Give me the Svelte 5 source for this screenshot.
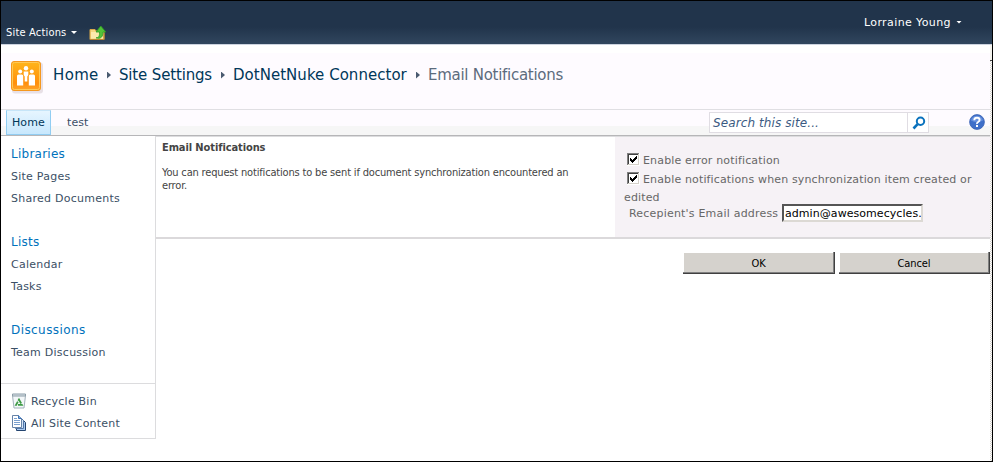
<script>
  const crumbs = ['Home', 'Site Settings', 'DotNetNuke Connector'];
  const groups = [
    { title: 'Libraries', cls: 'lib', items: ['Site Pages', 'Shared Documents'] },
    { title: 'Lists', cls: 'lists', items: ['Calendar', 'Tasks'] },
    { title: 'Discussions', cls: 'disc', items: ['Team Discussion'] }
  ];
  let email = $state('admin@awesomecycles.com');
</script>

{#snippet check()}
  <svg class="check" width="13" height="13" viewBox="0 0 13 13" shape-rendering="crispEdges">
    <path fill="#fff" d="M0 0h13v13H0z" />
    <path fill="#808080" d="M0 0h12v1H1v11H0z" />
    <path fill="#404040" d="M1 1h10v1H2v9H1z" />
    <path fill="#d4d0c8" d="M11 1h1v11H1v-1h10z" />
    <path fill="#000" d="M3 5h1v1h1v1h1V6h1V5h1V4h1V3h1v3H9v1H8v1H7v1H6v1H5V9H4V8H3z" />
  </svg>
{/snippet}

<div class="page">
  <header class="ribbon">
    <div class="actions">
      <span class="sa">Site Actions</span>
      <i class="caret"></i>
      <svg class="folder" width="17" height="16" viewBox="0 0 17 16">
        <path d="M1 4.500h5l1 1.500h8v8.500H1z" fill="#f6d883" stroke="#d9a94b" />
        <path d="M2 7h12v6.500H2z" fill="#fbe9ae" />
        <path d="M1 14.500h14V8" fill="none" stroke="#b98630" />
        <path d="M7 12.800c3.500 0 3.500-2.300 3.500-5.800H7L11.800 1l5 6H14c0 4.500-2 7.500-7 5.800z" fill="#52c238" stroke="#2c9a24" stroke-width=".8" />
      </svg>
    </div>
    <div class="user"><span>Lorraine Young</span><i class="caret"></i></div>
  </header>

  <div class="body">
    <div class="main">
      <div class="title">
        <svg class="logo" width="34" height="34" viewBox="0 0 34 34">
          <defs>
            <linearGradient id="lg" x1="0" y1="0" x2="0" y2="1">
              <stop offset="0" stop-color="#ffb61c" />
              <stop offset=".75" stop-color="#ff8f0c" />
              <stop offset="1" stop-color="#ffa62c" />
            </linearGradient>
          </defs>
          <rect x="2" y="2.500" width="31" height="31" rx="3" fill="#d8cfd6" opacity=".6" />
          <rect x="1.500" y="1.500" width="29" height="29" rx="2.500" fill="url(#lg)" stroke="#f5981f" />
          <rect x="2.500" y="2.500" width="27" height="27" rx="2" fill="none" stroke="#ffc956" />
          <g fill="#fff">
            <circle cx="16" cy="8.200" r="2.200" />
            <circle cx="10.200" cy="11.500" r="2" />
            <circle cx="21.800" cy="11.500" r="2" />
            <path d="M7 16q0-1.500 1.500-1.500h3.200q1.500 0 1.500 1.500v9.500H7zM18.800 16q0-1.500 1.500-1.500h3.200q1.500 0 1.500 1.500v9.500h-6.200zM13.700 11.500h4.600v3.500l-1 1.500v5h-2.600v-5l-1-1.500z" />
          </g>
        </svg>
        <nav class="crumbs">
          {#each crumbs as c, i}
            <span class="c{i}">{c}</span><i class="arrow"></i>
          {/each}
          <span class="here">Email Notifications</span>
        </nav>
      </div>

      <div class="topnav">
        <span class="tab on">Home</span>
        <span class="tab test">test</span>
        <div class="search">
          <span class="q">Search this site...</span>
          <span class="go">
            <svg width="14" height="14" viewBox="0 0 14 14">
              <circle cx="8.500" cy="5.300" r="3.700" fill="none" stroke="#0a72bd" stroke-width="2" />
              <path d="M5.600 8.200L1.500 12.500" stroke="#0a72bd" stroke-width="2.600" />
            </svg>
          </span>
        </div>
        <svg class="help" width="16" height="16" viewBox="0 0 16 16">
          <circle cx="8" cy="8" r="7.400" fill="#3f6fc9" stroke="#3a62b4" stroke-width=".8" />
          <path d="M2 6.500a6.200 6.200 0 0 1 12 0q-6 3-12 0z" fill="#6690de" />
          <path d="M5.300 6.200Q5.400 3.800 8 3.800t2.600 2.200q0 1.200-1.400 2T8 10" fill="none" stroke="#fff" stroke-width="1.900" />
          <rect x="7" y="11" width="2" height="2" fill="#fff" />
        </svg>
      </div>

      <div class="cols">
        <aside>
          <div class="groups">
            {#each groups as g}
              <section>
                <h3 class={g.cls}>{g.title}</h3>
                {#each g.items as item}<a>{item}</a>{/each}
              </section>
            {/each}
          </div>
          <div class="tools">
            <a>
              <svg width="16" height="16" viewBox="0 0 16 16">
                <path d="M1.500 2.500h13L13 15H3z" fill="#f3f7f9" stroke="#a3b1ba" />
                <path d="M1.500 1h13v2h-13z" fill="#dbe3e8" stroke="#8b9ca7" />
                <path d="M8 6.500l2.900 5.300H5.100z" fill="none" stroke="#3e9a44" stroke-width="1.800" stroke-dasharray="4.500 1" />
              </svg>
              <span>Recycle Bin</span>
            </a>
            <a>
              <svg width="16" height="16" viewBox="0 0 16 16">
                <path d="M5.500 4.500h6l3 3v8h-9z" fill="#a9c9f0" stroke="#24446f" />
                <path d="M4.500 2.500h5l3 3v8h-8z" fill="#d6e6f8" stroke="#5478a8" />
                <path d="M1.500.5h6l3 3v9h-9z" fill="#fff" stroke="#6683a8" />
                <path d="M7.500.5v3h3" fill="#7fb0e8" stroke="#3d6fae" />
                <path d="M3 3.500h3M3 5.500h6M3 7.500h6M3 9.500h6" stroke="#7aa0cf" />
              </svg>
              <span class="asc">All Site Content</span>
            </a>
          </div>
        </aside>

        <div class="content">
          <div class="section">
            <div class="desc">
              <h4>Email Notifications</h4>
              <p><span>You can request notifications to be sent if document synchronization encountered an</span><br />error.</p>
            </div>
            <div class="controls">
              <div class="row r1">{@render check()}<span>Enable error notification</span></div>
              <div class="row r2">{@render check()}<span>Enable notifications when synchronization item created or</span></div>
              <div class="row r3"><span>edited</span></div>
              <div class="row r4"><span>Recepient's Email address</span><input bind:value={email} aria-label="Email" /></div>
            </div>
          </div>
          <div class="buttons"><button>OK</button><button class="cancel">Cancel</button></div>
        </div>
      </div>
    </div>
    <div class="scroll"><i></i></div>
  </div>
</div>

<style>
  .page {
    box-sizing: border-box; width: 993px; height: 462px; border: 1px solid #000;
    background: #fff; overflow: hidden; display: flex; flex-direction: column;
    font: 11px/22px "DejaVu Sans", Verdana, sans-serif; color: #3b4f65; letter-spacing: .25px;
  }
  span, a, h3, h4, p { white-space: nowrap; }
  .ribbon {
    height: 43px; border-bottom: 1px solid #ccd3df; display: flex; justify-content: space-between; color: #fff;
    background: linear-gradient(#21344b 0, #21344b 26px, #30455d 42px);
  }
  .caret { width: 6px; height: 3px; flex: none; background: #fff; clip-path: polygon(0 0, 100% 0, 50% 100%); }
  .actions { display: flex; align-items: center; padding: 20px 0 0 5px; font-size: 11px; font-family: "DejaVu Sans Condensed", "DejaVu Sans", sans-serif; font-stretch: condensed; }
  .sa { width: 65px; letter-spacing: .18px; }
  .folder { margin-left: 12px; }
  .user { display: flex; align-items: center; height: 22px; padding: 10px 30px 0 0; gap: 5px; }
  .user span { letter-spacing: .4px; padding-top: 1px; }
  .body { flex: 1; display: flex; min-height: 0; }
  .main { flex: 1; display: flex; flex-direction: column; }
  .scroll { width: 2px; background: repeating-conic-gradient(#fff 0 25%, #d6d3ce 0 50%) 0 0 / 2px 2px; }
  .scroll i { display: block; height: 15px; background: #f4f3ee; border-bottom: 1px solid #404040; }
  .title { height: 64px; border-bottom: 1px solid #e0dfe3; display: flex; background: linear-gradient(#fff 0 8px, #fefbff 8px); }
  .logo { margin: 15px 0 0 9px; flex: none; }
  .crumbs { display: flex; align-items: center; height: 20px; margin: 20px 0 0 9px; font-size: 15px; line-height: 20px; color: #003759; letter-spacing: 0; }
  .crumbs .c0 { width: 46px; letter-spacing: .35px; }
  .crumbs .c1 { width: 94px; letter-spacing: -.16px; }
  .crumbs .c2 { width: 175px; letter-spacing: .03px; }
  .crumbs .here { color: #5c6b7d; letter-spacing: -.28px; }
  .arrow { width: 4px; height: 7px; margin: 0 8px; background: #4a5a70; clip-path: polygon(0 0, 100% 50%, 0 100%); }
  .topnav { height: 25px; border-bottom: 1px solid #b6b6b8; display: flex; background: linear-gradient(#fefbff 0 16px, #f6f6f6 16px); line-height: 24px; }
  .tab.on { box-sizing: border-box; width: 45px; margin-left: 5px; padding-left: 5px; border: 1px solid #91cdf2; border-top-color: #c6e5f8; background: linear-gradient(#e6f5ff, #c8e8fd); color: #003759; letter-spacing: .1px; line-height: 23px; }
  .tab.test { padding: 1px 0 0 16px; letter-spacing: .1px; }
  .search { box-sizing: border-box; width: 220px; height: 21px; margin: 2px 0 0 auto; border: 1px solid #e0dde3; background: #fff; display: flex; color: #3b5a82; }
  .q { width: 197px; padding: 1px 0 0 3px; font-size: 12px; line-height: 19px; font-style: italic; letter-spacing: .1px; box-sizing: border-box; }
  .go { flex: 1; border-left: 1px solid #e0dde3; display: flex; align-items: center; padding-left: 4px; }
  .help { margin: 4px 5px 0 40px; flex: none; }
  .cols { flex: 1; display: flex; min-height: 0; }
  aside { width: 155px; height: 303px; box-sizing: border-box; border-right: 1px solid #dcdcde; border-bottom: 1px solid #dcdcde; }
  .groups { height: 240px; padding: 7px 0 0 10px; box-sizing: content-box; border-bottom: 1px solid #dcdcde; }
  section { margin-bottom: 22px; }
  h3 { margin: 0; font-weight: 400; font-size: 12px; color: #0072bc; line-height: 22px; letter-spacing: .25px; }
  h3.disc { letter-spacing: .42px; }
  aside a { display: block; box-sizing: border-box; height: 22px; line-height: 24px; letter-spacing: .25px; }
  .tools { padding: 6px 0 0 10px; }
  .tools a { display: flex; align-items: center; gap: 4px; letter-spacing: .22px; }
  .tools a span { padding-top: 2px; line-height: 22px; }
  .tools svg { margin-top: -1px; }
  .content { flex: 1; border-top: 1px solid #dcdcde; display: flex; flex-direction: column; }
  .section { height: 100px; border-bottom: 2px solid #dbd9db; display: flex; }
  .desc { width: 459px; box-sizing: border-box; padding: 4px 0 0 6px; color: #444; font: 11px/13px "DejaVu Sans Condensed", "DejaVu Sans", sans-serif; font-stretch: condensed; letter-spacing: -.17px; }
  h4 { margin: 0; font-size: 11px; line-height: 14px; letter-spacing: -.1px; }
  .desc p { margin: 11px 0 0; }
  .controls { flex: 1; background: #f6f2f6; padding: 13px 0 0 9px; color: #676767; }
  .row { display: flex; align-items: center; height: 19px; line-height: 19px; }
  .check { margin: 0 3px 0 3px; flex: none; }
  .row span { letter-spacing: .14px; padding-top: 2px; }
  .r1 span { letter-spacing: .16px; }
  .r3 { height: 17px; }
  .r4 { padding-left: 5px; height: 15px; }
  .r4 span { width: 153px; letter-spacing: .2px; padding-top: 1px; }
  input { box-sizing: border-box; width: 141px; height: 18px; padding: 1px 0 0 1px; border: 2px solid; border-color: #555 #dcd9d4 #dcd9d4 #555; border-radius: 0; background: #fff; color: #000; font: 11px/13px "DejaVu Sans", Verdana, sans-serif; letter-spacing: .06px; outline: 0; }
  .buttons { display: flex; justify-content: flex-end; gap: 4px; padding-top: 13px; }
  button { box-sizing: border-box; width: 152px; height: 22px; padding: 2px 0 0; border: solid #404040; border-width: 0 1px 1px 0; box-shadow: inset -1px -1px #808080, inset 1px 1px #fff; border-radius: 0; background: #d5d2cd; color: #000; font: 11px/19px "DejaVu Sans Condensed", "DejaVu Sans", sans-serif; font-stretch: condensed; letter-spacing: -.1px; }
  .cancel { width: 151px; }
</style>
